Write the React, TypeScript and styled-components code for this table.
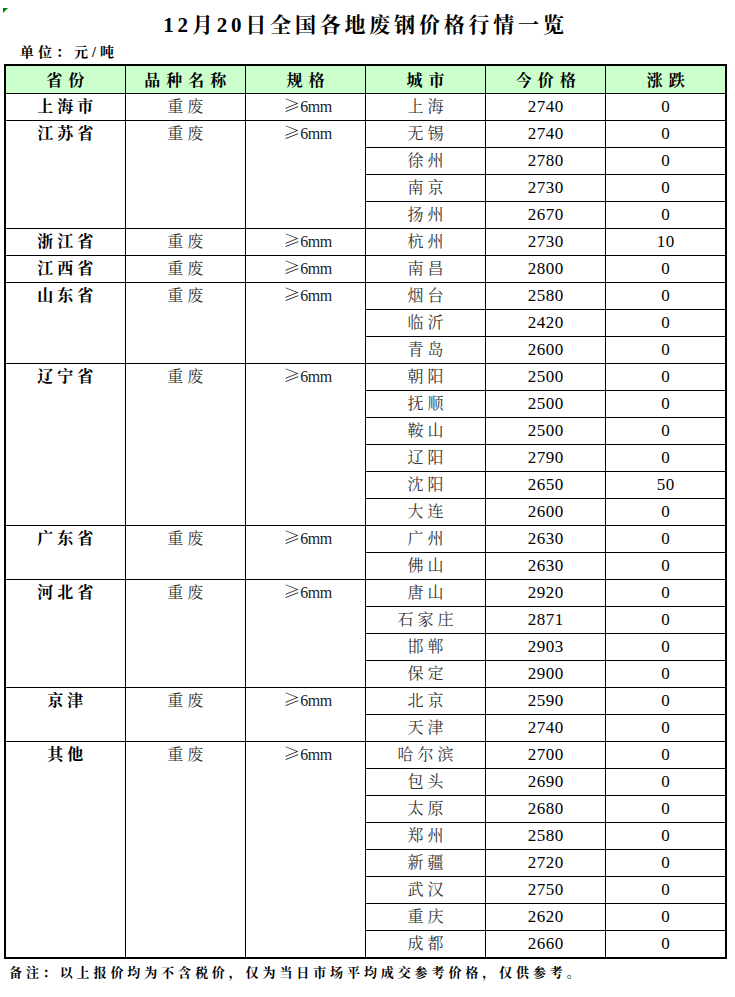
import React from 'react';
import styled, { createGlobalStyle } from 'styled-components';

const GlobalStyle = createGlobalStyle`
  html, body {
    margin: 0;
    padding: 0;
    background: #ffffff;
  }
  body {
    font-family: 'Liberation Serif', 'Noto Serif CJK SC', 'Noto Sans CJK SC', serif;
    color: #000;
  }
`;

const SERIF = `'Liberation Serif', 'Noto Serif CJK SC', 'Noto Sans CJK SC', serif`;
const CJK = `'Noto Serif CJK SC', 'Noto Sans CJK SC', sans-serif`;

const Sheet = styled.div`
  width: 735px;
  padding: 5px 0 0 4px;
  box-sizing: border-box;
`;

const TitleRow = styled.div`
  position: relative;
  width: 723px;
  height: 40px;
  line-height: 40px;
  text-align: center;
  font-family: ${SERIF};
  font-size: 21px;
  font-weight: bold;
  letter-spacing: 3.8px;
`;

const CommentMark = styled.span`
  position: absolute;
  left: -1px;
  top: 3px;
  width: 0;
  height: 0;
  border-top: 5px solid #008000;
  border-right: 5px solid transparent;
`;

const Unit = styled.div`
  height: 16px;
  line-height: 16px;
  margin: 0 0 3px 16px;
  font-family: ${SERIF};
  font-size: 14px;
  font-weight: bold;
  letter-spacing: 4px;
`;

const Table = styled.table`
  width: 723px;
  border-collapse: collapse;
  table-layout: fixed;
  border: 2px solid #000;
`;

const HeadCell = styled.th`
  height: 27px;
  padding: 0;
  background: #ccffcc;
  border: 1px solid #000;
  border-top: 2px solid #000;
  font-family: ${SERIF};
  font-size: 16px;
  font-weight: bold;
  letter-spacing: 6px;
  text-indent: 6px;
  text-align: center;
  vertical-align: middle;
`;

const Row = styled.tr`
  height: 27px;
`;

const Cell = styled.td<{ $bold?: boolean; $num?: boolean; $merged?: boolean }>`
  padding: 0;
  border: 1px solid #000;
  text-align: center;
  vertical-align: ${p => (p.$merged ? 'top' : 'middle')};
  line-height: ${p => (p.$merged ? '25px' : '24px')};
  font-family: ${SERIF};
  font-size: ${p => (p.$num ? '17px' : '16px')};
  font-weight: ${p => (p.$bold ? 'bold' : 'normal')};
  color: ${p => (p.$bold || p.$num ? '#000' : '#333')};
  letter-spacing: ${p => (p.$num ? '0.5px' : '4px')};
  text-indent: ${p => (p.$num ? '0' : '4px')};
  white-space: nowrap;
`;

const Spec = styled.span`
  letter-spacing: 0;
  color: #222;
`;

const GeSign = styled.span`
  font-family: ${CJK};
  font-size: 17px;
  line-height: 1;
`;

const Mm = styled.span`
  font-family: 'Liberation Serif', serif;
  font-size: 16px;
  line-height: 1;
  letter-spacing: -0.5px;
`;

const Footer = styled.div`
  margin: 4px 0 0 5px;
  line-height: 20px;
  font-family: ${SERIF};
  font-size: 13px;
  font-weight: bold;
  letter-spacing: 3.9px;
`;

type City = [string, number, number];
interface Group {
  province: string;
  cities: City[];
}

const groups: Group[] = [
  { province: '上海市', cities: [['上海', 2740, 0]] },
  {
    province: '江苏省',
    cities: [
      ['无锡', 2740, 0],
      ['徐州', 2780, 0],
      ['南京', 2730, 0],
      ['扬州', 2670, 0],
    ],
  },
  { province: '浙江省', cities: [['杭州', 2730, 10]] },
  { province: '江西省', cities: [['南昌', 2800, 0]] },
  {
    province: '山东省',
    cities: [
      ['烟台', 2580, 0],
      ['临沂', 2420, 0],
      ['青岛', 2600, 0],
    ],
  },
  {
    province: '辽宁省',
    cities: [
      ['朝阳', 2500, 0],
      ['抚顺', 2500, 0],
      ['鞍山', 2500, 0],
      ['辽阳', 2790, 0],
      ['沈阳', 2650, 50],
      ['大连', 2600, 0],
    ],
  },
  {
    province: '广东省',
    cities: [
      ['广州', 2630, 0],
      ['佛山', 2630, 0],
    ],
  },
  {
    province: '河北省',
    cities: [
      ['唐山', 2920, 0],
      ['石家庄', 2871, 0],
      ['邯郸', 2903, 0],
      ['保定', 2900, 0],
    ],
  },
  {
    province: '京津',
    cities: [
      ['北京', 2590, 0],
      ['天津', 2740, 0],
    ],
  },
  {
    province: '其他',
    cities: [
      ['哈尔滨', 2700, 0],
      ['包头', 2690, 0],
      ['太原', 2680, 0],
      ['郑州', 2580, 0],
      ['新疆', 2720, 0],
      ['武汉', 2750, 0],
      ['重庆', 2620, 0],
      ['成都', 2660, 0],
    ],
  },
];

const headers = ['省份', '品种名称', '规格', '城市', '今价格', '涨跌'];

export default function App() {
  return (
    <Sheet>
      <GlobalStyle />
      <TitleRow>
        <CommentMark />
        12月20日全国各地废钢价格行情一览
      </TitleRow>
      <Unit>单位：元/吨</Unit>
      <Table>
        <thead>
          <tr>
            {headers.map(h => (
              <HeadCell key={h}>{h}</HeadCell>
            ))}
          </tr>
        </thead>
        <tbody>
          {groups.map(g =>
            g.cities.map((c, i) => {
              const span = g.cities.length;
              return (
                <Row key={g.province + c[0]}>
                  {i === 0 && (
                    <>
                      <Cell rowSpan={span} $bold $merged>
                        {g.province}
                      </Cell>
                      <Cell rowSpan={span} $merged>
                        重废
                      </Cell>
                      <Cell rowSpan={span} $merged>
                        <Spec>
                          <GeSign>≥</GeSign>
                          <Mm>6mm</Mm>
                        </Spec>
                      </Cell>
                    </>
                  )}
                  <Cell>{c[0]}</Cell>
                  <Cell $num>{c[1]}</Cell>
                  <Cell $num>{c[2]}</Cell>
                </Row>
              );
            })
          )}
        </tbody>
      </Table>
      <Footer>备注：以上报价均为不含税价，仅为当日市场平均成交参考价格，仅供参考。</Footer>
    </Sheet>
  );
}
